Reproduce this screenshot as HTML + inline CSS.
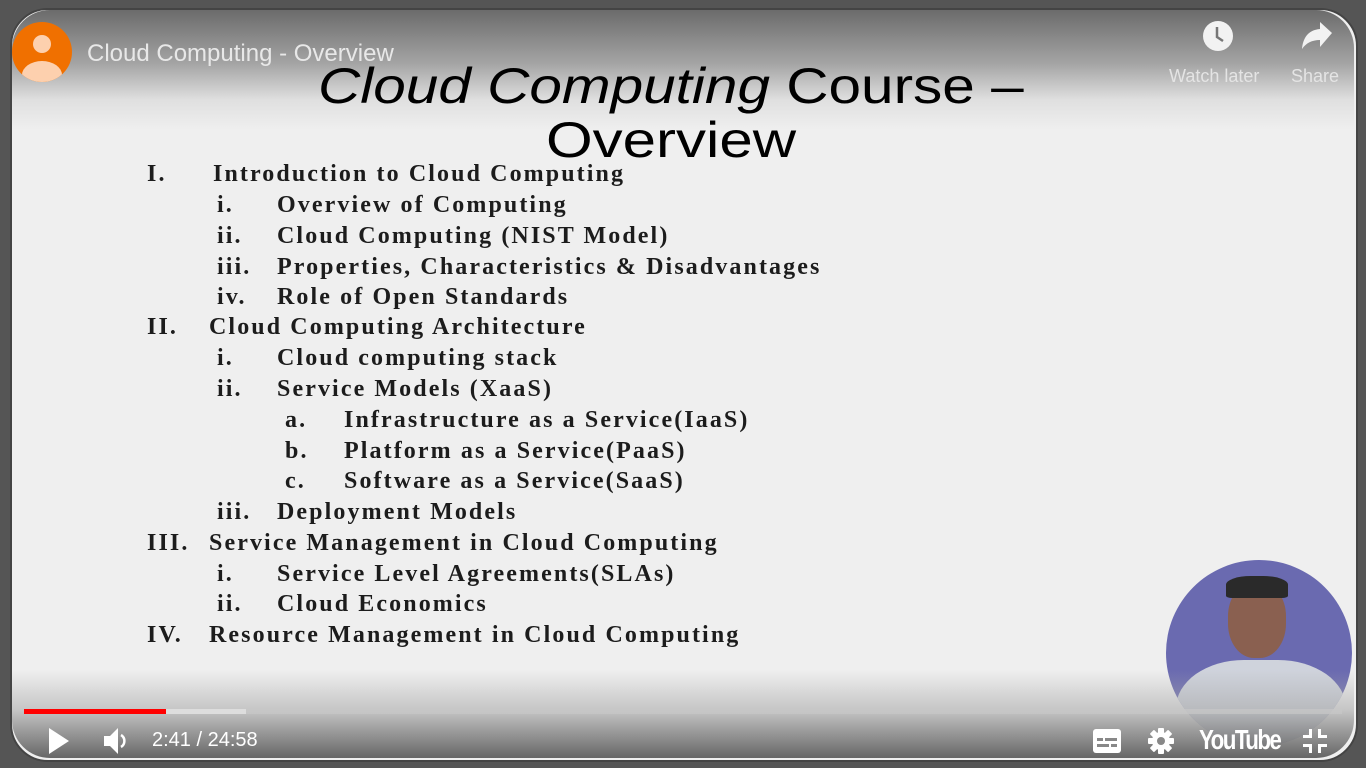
<!DOCTYPE html>
<html><head><meta charset="utf-8"><style>
html,body{margin:0;padding:0;width:1366px;height:768px;overflow:hidden;background:#555;}
.frame{position:absolute;left:10px;top:8px;width:1344px;height:750px;border-radius:38px;border:2px solid #444;overflow:hidden;background:#efefef;}
.t{position:absolute;font-family:"Liberation Serif",serif;font-weight:bold;font-size:24px;letter-spacing:2.1px;color:#1c1c1c;white-space:nowrap;line-height:26px;}
.h{position:absolute;font-family:"Liberation Sans",sans-serif;font-size:50px;color:#000;white-space:nowrap;line-height:50px;transform-origin:left top;z-index:5;}
.ui{position:absolute;font-family:"Liberation Sans",sans-serif;color:#eee;white-space:nowrap;z-index:6;}
</style></head><body>
<div class="frame">
<div class="t" style="left:135px;top:151px">I.</div><div class="t" style="left:201px;top:151px">Introduction to Cloud Computing</div>
<div class="t" style="left:205px;top:182px">i.</div><div class="t" style="left:265px;top:182px">Overview of Computing</div>
<div class="t" style="left:205px;top:213px">ii.</div><div class="t" style="left:265px;top:213px">Cloud Computing (NIST Model)</div>
<div class="t" style="left:205px;top:244px">iii.</div><div class="t" style="left:265px;top:244px">Properties, Characteristics &amp; Disadvantages</div>
<div class="t" style="left:205px;top:274px">iv.</div><div class="t" style="left:265px;top:274px">Role of Open Standards</div>
<div class="t" style="left:135px;top:304px">II.</div><div class="t" style="left:197px;top:304px">Cloud Computing Architecture</div>
<div class="t" style="left:205px;top:335px">i.</div><div class="t" style="left:265px;top:335px">Cloud computing stack</div>
<div class="t" style="left:205px;top:366px">ii.</div><div class="t" style="left:265px;top:366px">Service Models (XaaS)</div>
<div class="t" style="left:273px;top:397px">a.</div><div class="t" style="left:332px;top:397px">Infrastructure as a Service(IaaS)</div>
<div class="t" style="left:273px;top:428px">b.</div><div class="t" style="left:332px;top:428px">Platform as a Service(PaaS)</div>
<div class="t" style="left:273px;top:458px">c.</div><div class="t" style="left:332px;top:458px">Software as a Service(SaaS)</div>
<div class="t" style="left:205px;top:489px">iii.</div><div class="t" style="left:265px;top:489px">Deployment Models</div>
<div class="t" style="left:135px;top:520px">III.</div><div class="t" style="left:197px;top:520px">Service Management in Cloud Computing</div>
<div class="t" style="left:205px;top:551px">i.</div><div class="t" style="left:265px;top:551px">Service Level Agreements(SLAs)</div>
<div class="t" style="left:205px;top:581px">ii.</div><div class="t" style="left:265px;top:581px">Cloud Economics</div>
<div class="t" style="left:135px;top:612px">IV.</div><div class="t" style="left:197px;top:612px">Resource Management in Cloud Computing</div>

<div style="position:absolute;left:1154px;top:550px;width:186px;height:186px;border-radius:50%;background:#6a6ab0;overflow:hidden;">
 <div style="position:absolute;left:62px;top:22px;width:58px;height:76px;border-radius:45%;background:#8a6050;"></div>
 <div style="position:absolute;left:60px;top:16px;width:62px;height:22px;border-radius:40% 40% 10% 10%;background:#2a2a2a;"></div>
 <div style="position:absolute;left:10px;top:100px;width:170px;height:120px;border-radius:40% 40% 0 0;background:#cfd3dc;"></div>
</div>
</div>
<div style="position:absolute;left:12px;top:10px;width:1342px;height:120px;border-radius:38px 38px 0 0;background:linear-gradient(rgba(100,100,100,.95),rgba(140,140,140,.75) 45%,rgba(200,200,200,.4) 75%,rgba(239,239,239,0));"></div>
<div style="position:absolute;left:12px;top:670px;width:1342px;height:88px;border-radius:0 0 38px 38px;background:linear-gradient(rgba(239,239,239,0),rgba(170,170,170,.6) 45%,rgba(95,95,95,.95));"></div>

<div class="h" style="left:318px;top:61px;transform:scaleX(1.17);"><i>Cloud Computing</i> Course –</div>
<div class="h" style="left:546px;top:115px;transform:scaleX(1.2);">Overview</div>

<div style="position:absolute;left:12px;top:22px;width:60px;height:60px;border-radius:50%;background:#f07000;overflow:hidden;z-index:6;">
 <div style="position:absolute;left:21px;top:13px;width:18px;height:18px;border-radius:50%;background:#fdd0ae;"></div>
 <div style="position:absolute;left:10px;top:39px;width:40px;height:28px;border-radius:50%;background:#fdd0ae;"></div>
</div>
<div class="ui" style="left:87px;top:40px;font-size:24px;color:#e8e8e8;">Cloud Computing - Overview</div>

<svg style="position:absolute;left:1202px;top:20px;z-index:6" width="32" height="32" viewBox="0 0 32 32"><circle cx="16" cy="16" r="15" fill="#f2f2f2"/><path d="M15 7v10l6 4" stroke="#777" stroke-width="2.5" fill="none"/></svg>
<div class="ui" style="left:1169px;top:66px;font-size:18px;color:#e4e4e4;">Watch later</div>
<svg style="position:absolute;left:1300px;top:22px;z-index:6" width="34" height="30" viewBox="0 0 34 30"><path d="M32 11L20 0v7C8 8 3 16 2 27c4-6 10-9 18-9v7z" fill="#f2f2f2"/></svg>
<div class="ui" style="left:1291px;top:66px;font-size:18px;color:#e4e4e4;">Share</div>

<div style="position:absolute;left:24px;top:709px;width:1318px;height:5px;background:rgba(200,200,200,.7);"></div>
<div style="position:absolute;left:24px;top:709px;width:222px;height:5px;background:#ddd;"></div>
<div style="position:absolute;left:24px;top:709px;width:142px;height:5px;background:#f00;"></div>

<svg style="position:absolute;left:48px;top:728px" width="22" height="26"><path d="M1 0L21 13L1 26z" fill="#fff"/></svg>
<svg style="position:absolute;left:104px;top:728px" width="24" height="26"><path d="M0 8h6l8-8v26l-8-8H0z" fill="#fff"/><path d="M17 7a7 7 0 0 1 0 12" stroke="#fff" stroke-width="2.5" fill="none"/></svg>
<div class="ui" style="left:152px;top:729px;font-size:20px;color:#fff;">2:41 / 24:58</div>

<svg style="position:absolute;left:1093px;top:729px" width="28" height="24"><rect x="0" y="0" width="28" height="24" rx="3" fill="#fff"/><rect x="4" y="9" width="6" height="3" fill="#888"/><rect x="12" y="9" width="12" height="3" fill="#888"/><rect x="4" y="15" width="12" height="3" fill="#888"/><rect x="18" y="15" width="6" height="3" fill="#888"/></svg>
<svg style="position:absolute;left:1148px;top:728px" width="26" height="26" viewBox="0 0 26 26"><g fill="#fff"><circle cx="13" cy="13" r="9"/><rect x="10" y="0" width="6" height="26" rx="1"/><rect x="0" y="10" width="26" height="6" rx="1"/><rect x="10" y="0" width="6" height="26" rx="1" transform="rotate(45 13 13)"/><rect x="10" y="0" width="6" height="26" rx="1" transform="rotate(-45 13 13)"/></g><circle cx="13" cy="13" r="4" fill="#888"/></svg>
<div class="ui" style="left:1199px;top:724px;font-size:28px;font-weight:bold;color:#fff;letter-spacing:-2px;transform:scaleX(.8);transform-origin:left;">YouTube</div>
<svg style="position:absolute;left:1303px;top:729px" width="24" height="24"><g fill="#fff"><path d="M6 0h3v9H0V6h6z"/><path d="M15 0h3v6h6v3h-9z"/><path d="M0 15h9v9H6v-6H0z"/><path d="M15 15h9v3h-6v6h-3z"/></g></svg>
</body></html>
